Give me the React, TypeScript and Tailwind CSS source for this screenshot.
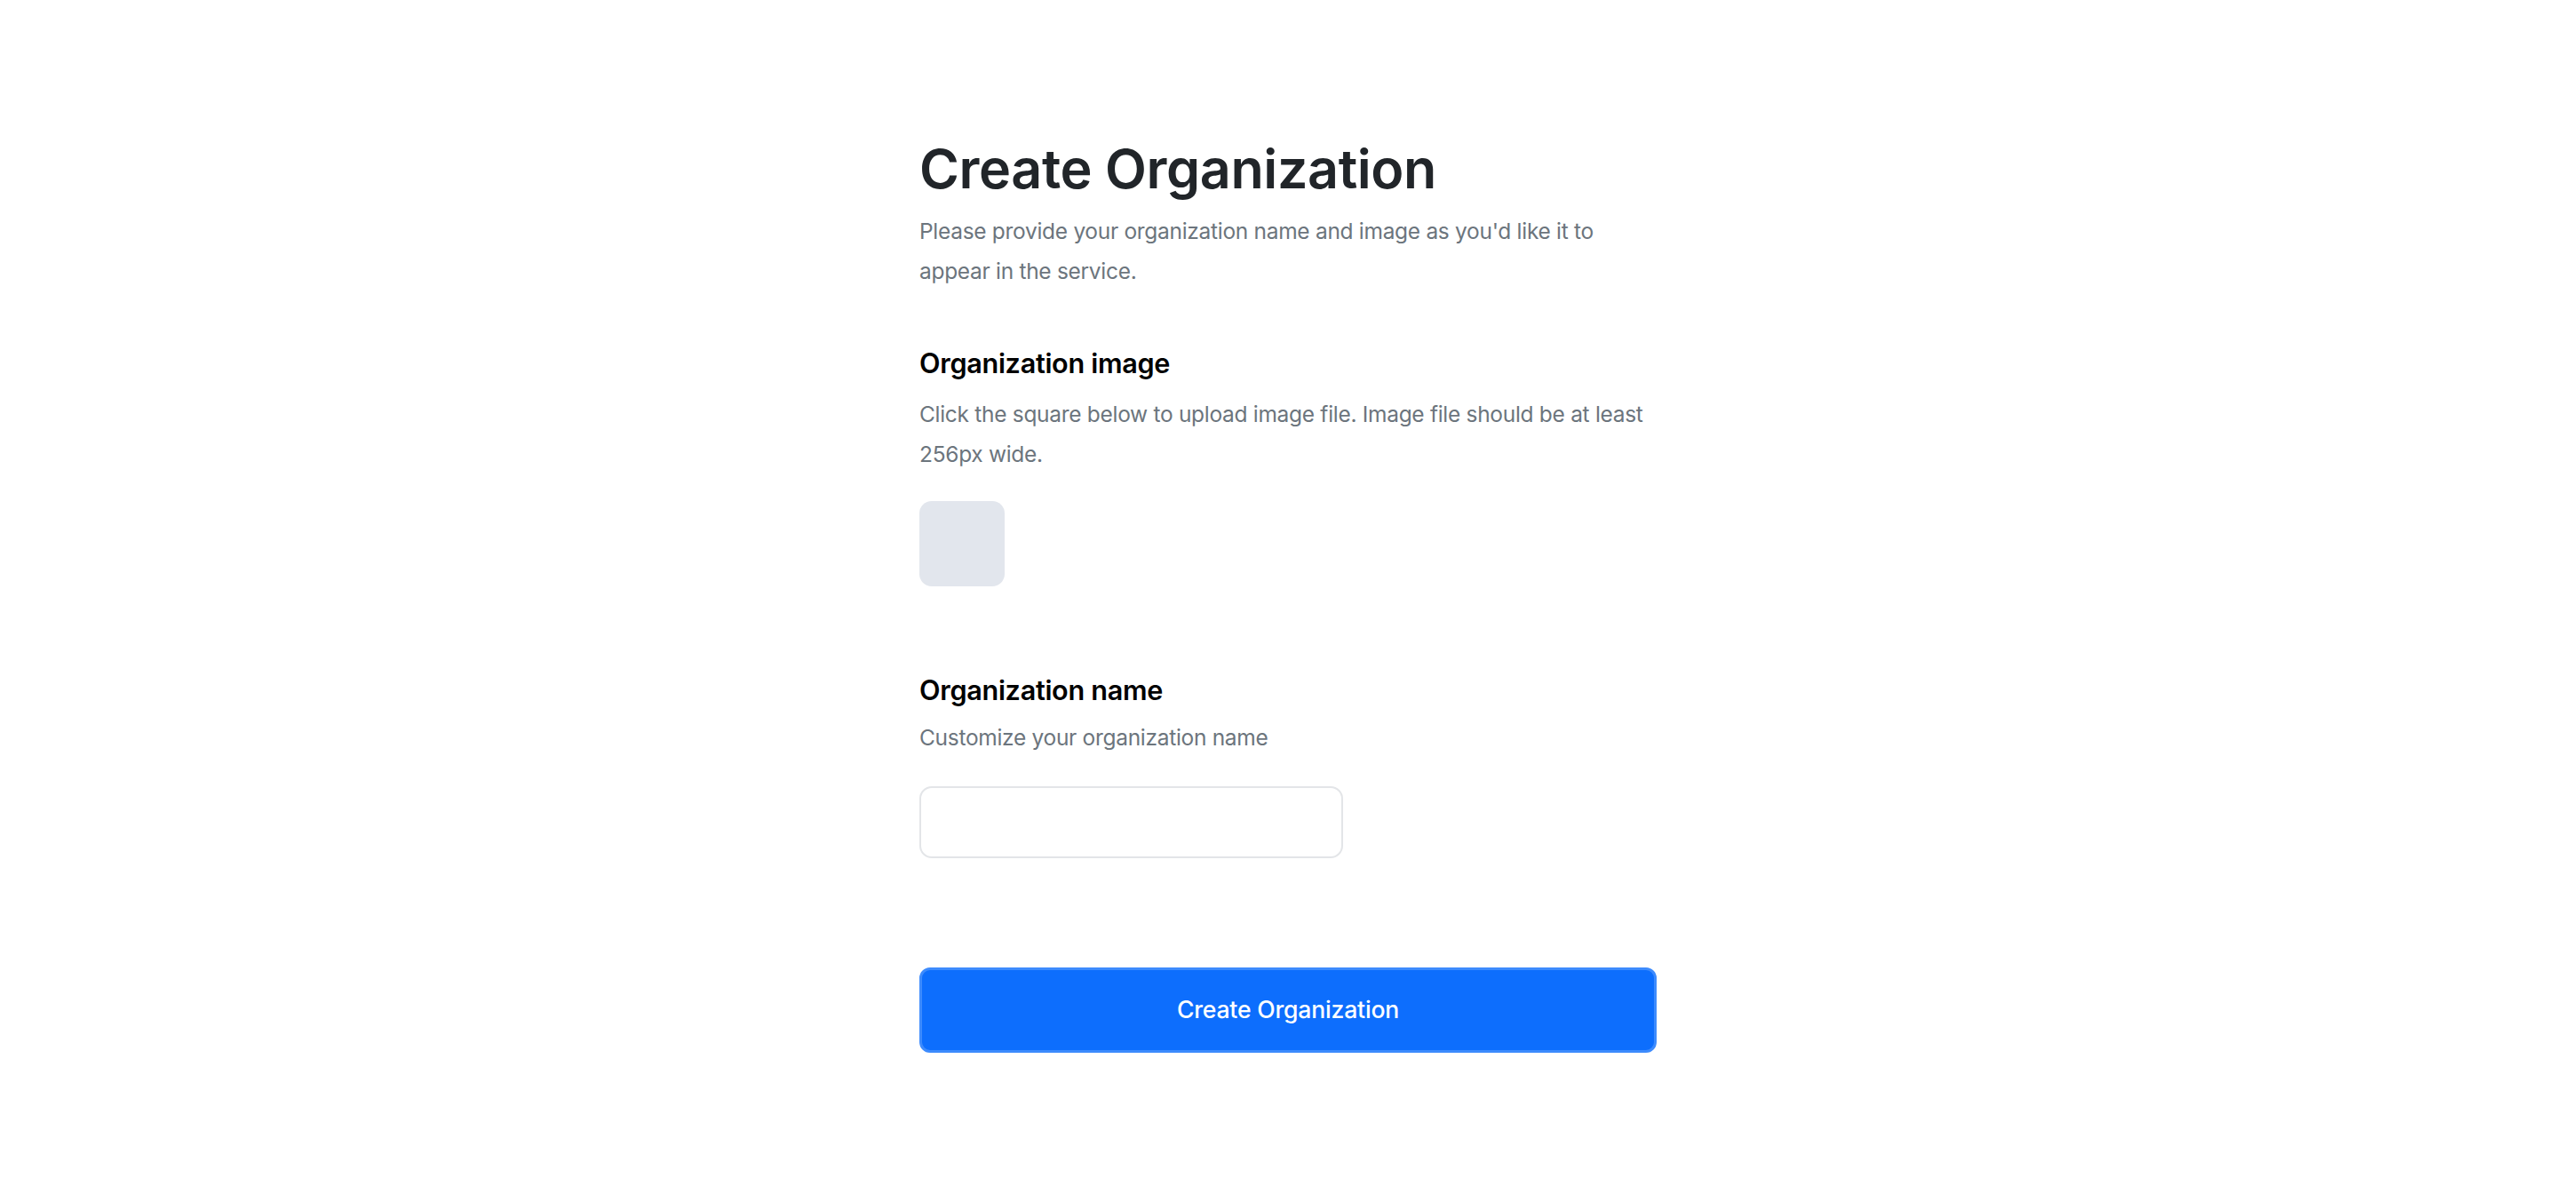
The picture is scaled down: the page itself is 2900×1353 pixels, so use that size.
import { useState } from "react";

const CreateOrganization = () => {
  const [name, setName] = useState("");

  return (
    <div
      className="min-h-screen bg-white"
      style={{ fontFamily: "Inter, 'Noto Sans', sans-serif" }}
    >
      <main className="mx-auto w-[830px] pt-[154px]">
        <h1 className="text-[61px] font-semibold leading-[72px] tracking-[-0.4px] text-[#212529]">
          Create Organization
        </h1>
        <p className="mt-[12px] max-w-[820px] text-[24.5px] leading-[45px] tracking-[-0.3px] text-[#6c757d]">
          Please provide your organization name and image as you'd like it to
          appear in the service.
        </p>

        <section className="mt-[61px]">
          <h2 className="text-[30.6px] font-semibold leading-[40px] tracking-[-0.3px] text-black">
            Organization image
          </h2>
          <p className="mt-[15px] max-w-[820px] text-[24.5px] leading-[45px] tracking-[-0.3px] text-[#6c757d]">
            Click the square below to upload image file. Image file should be at
            least 256px wide.
          </p>
          <button
            type="button"
            className="mt-[30px] block h-[96px] w-[96px] rounded-[14px] bg-[#e2e6ed]"
          />
        </section>

        <section className="mt-[97px]">
          <h2 className="text-[30.6px] font-semibold leading-[40px] tracking-[-0.3px] text-black">
            Organization name
          </h2>
          <p className="mt-[11px] text-[24.5px] leading-[45px] tracking-[-0.3px] text-[#6c757d]">
            Customize your organization name
          </p>
          <input
            type="text"
            value={name}
            onChange={(e) => setName(e.target.value)}
            className="mt-[32px] block h-[81px] w-[477px] rounded-[14px] border-2 border-[#e3e5e8] bg-white px-[22px] text-[24px] outline-none"
          />
        </section>

        <button
          type="button"
          className="mt-[123px] flex h-[96px] w-full items-center justify-center rounded-[12px] border-[3px] border-[#3d8bfd] bg-[#0d6efd] text-[26.6px] font-medium tracking-[-0.2px] text-white"
        >
          Create Organization
        </button>
      </main>
    </div>
  );
};

export default CreateOrganization;
